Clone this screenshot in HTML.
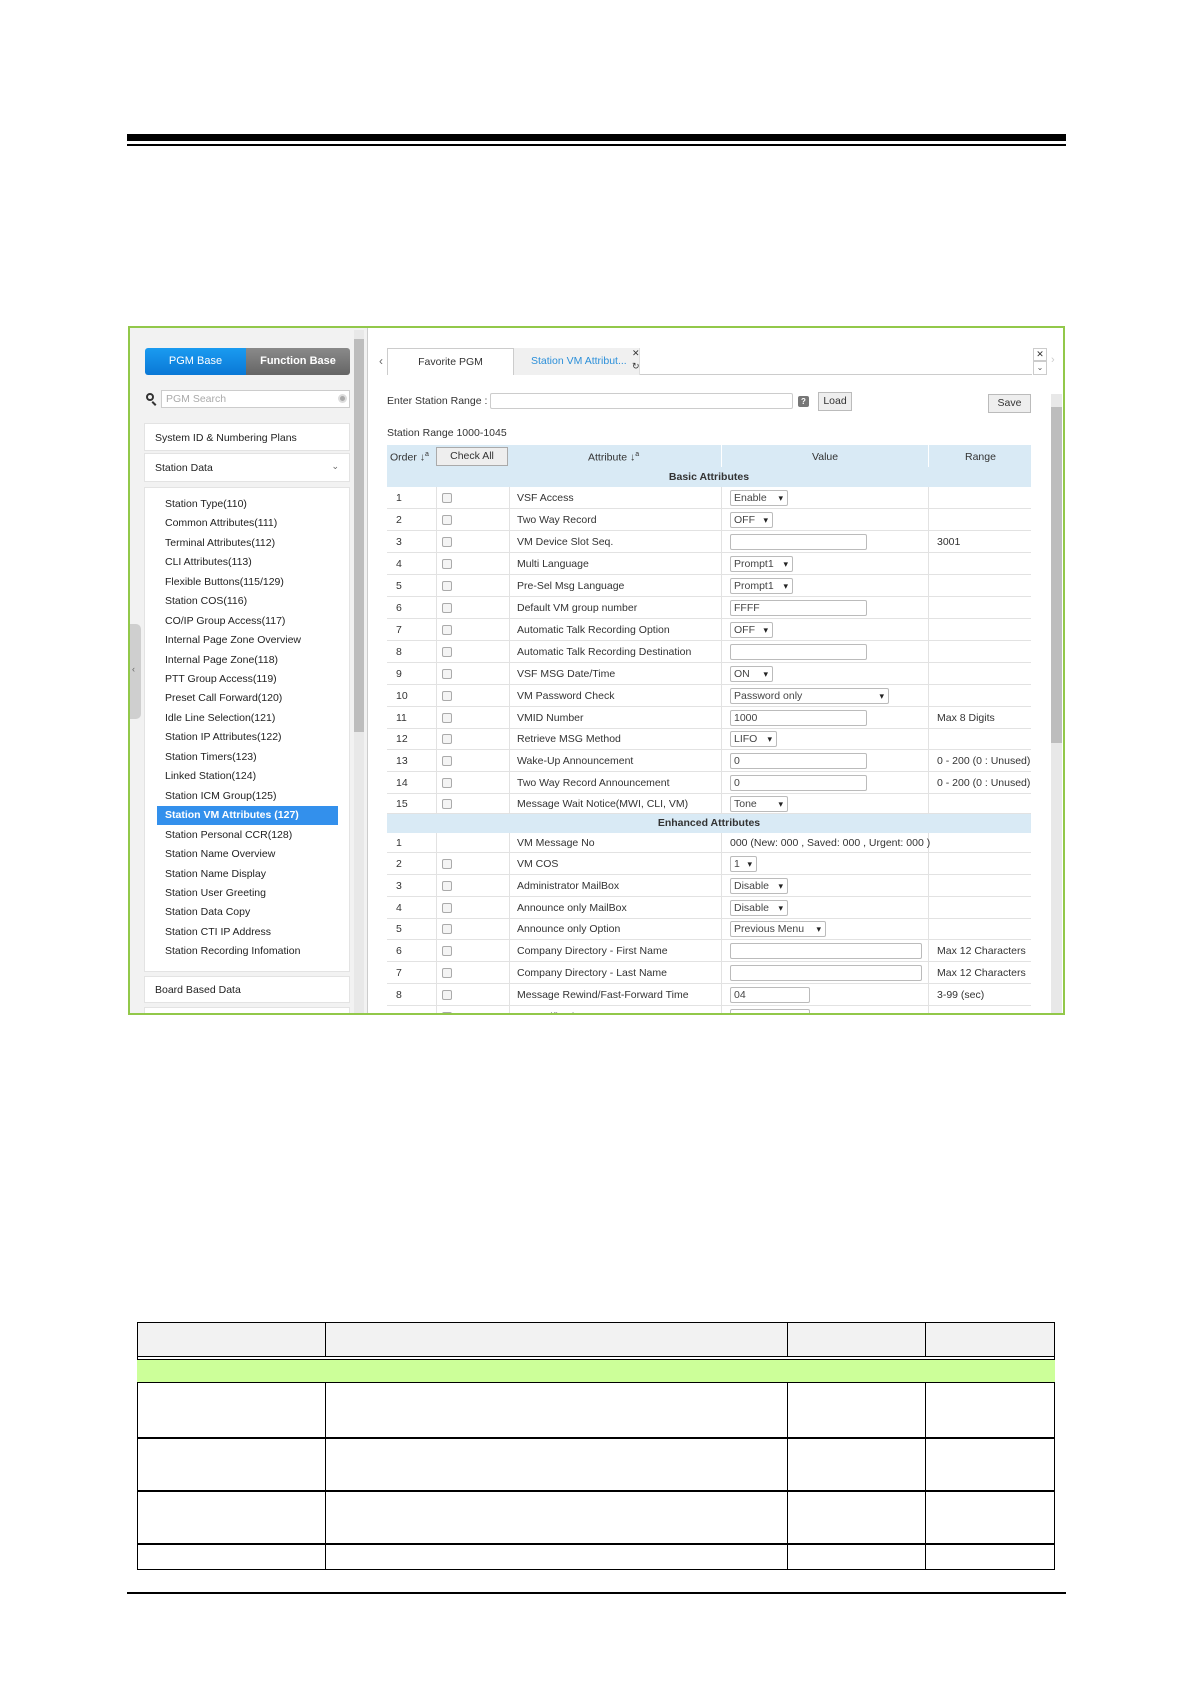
<!DOCTYPE html>
<html><head><meta charset="utf-8"><style>
*{box-sizing:border-box;margin:0;padding:0}
body{width:1191px;height:1684px;background:#fff;position:relative;font-family:"Liberation Sans",Arial,sans-serif;color:#333;overflow:hidden}
.a{position:absolute}
.t{font-size:10.5px;white-space:nowrap}
.li{position:absolute;left:165px;font-size:10.5px;color:#222;white-space:nowrap}
.row{position:absolute;left:387px;width:644px;border-bottom:1px solid #e2e2e2;font-size:10.5px;color:#333}
.row span{position:absolute;top:50%;transform:translateY(-50%);white-space:nowrap}
.cb{position:absolute;left:442px;width:10px;height:10px;border:1px solid #aaa;border-radius:2px;background:#f4f4f4;top:50%;transform:translateY(-50%)}
.sel,.inp{position:absolute;left:730px;height:16px;top:50%;transform:translateY(-50%);border:1px solid #bbb;border-radius:2px;background:#fff;font-size:10.5px;padding-left:3px;line-height:14px;color:#444}
.sel::after{content:"\25BE";position:absolute;right:4px;top:0;font-size:9px;color:#222}
.vl{position:absolute;top:0;bottom:0;width:1px;background:#e2e2e2}
</style></head><body>
<div class="a" style="left:127px;top:134px;width:939px;height:7px;background:#000"></div>
<div class="a" style="left:127px;top:144px;width:939px;height:2px;background:#000"></div>

<!-- screenshot box -->
<div class="a" style="left:128px;top:326px;width:937px;height:689px;border:2px solid #92c84a;background:#fff;overflow:hidden">
 <div class="a" style="left:0;top:0;width:238px;height:687px;background:#f2f2f2;border-right:1px solid #ccc"></div>
</div>
<!-- sidebar -->
<div class="a" style="left:354px;top:330px;width:10px;height:683px;background:#e8e8e8"></div>
<div class="a" style="left:354px;top:339px;width:10px;height:393px;background:#bdbdbd"></div>
<div class="a" style="left:130px;top:624px;width:11px;height:95px;background:#cfcfcf;border-radius:0 5px 5px 0"></div>
<div class="a t" style="left:132px;top:664px;font-size:9px;color:#666">‹</div>
<div class="a" style="left:145px;top:348px;width:101px;height:27px;background:linear-gradient(#1a9bf0,#0a78d6);border-radius:3px 0 0 3px;color:#fff;font-size:11px;text-align:center;line-height:27px">PGM Base</div>
<div class="a" style="left:246px;top:348px;width:104px;height:27px;background:linear-gradient(#8a8a8a,#656565);border-radius:0 3px 3px 0;color:#fff;font-size:11px;font-weight:bold;text-align:center;line-height:27px">Function Base</div>
<div class="a" style="left:146px;top:393px;width:8px;height:8px;border:2px solid #333;border-radius:50%"></div>
<div class="a" style="left:153px;top:401px;width:2px;height:5px;background:#333;transform:rotate(-45deg)"></div>
<div class="a" style="left:161px;top:390px;width:189px;height:18px;border:1px solid #ccc;background:#fff;font-size:10.5px;color:#aaa;padding:2px 4px">PGM Search</div>
<div class="a" style="left:338px;top:394px;width:9px;height:9px;border-radius:50%;background:#aaa;border:2px solid #ddd"></div>
<div class="a" style="left:144px;top:423px;width:206px;height:28px;background:#fff;border:1px solid #e3e3e3;font-size:10.5px;color:#222;padding:8px 10px">System ID &amp; Numbering Plans</div>
<div class="a" style="left:144px;top:453px;width:206px;height:29px;background:#fff;border:1px solid #e3e3e3;font-size:10.5px;color:#222;padding:8px 10px">Station Data<span style="position:absolute;right:10px;top:7px;font-size:9px;color:#666">⌄</span></div>
<div class="a" style="left:144px;top:487px;width:206px;height:485px;background:#fff;border:1px solid #e3e3e3"></div>
<div class="a" style="left:157px;top:806px;width:181px;height:19px;background:#3390ec"></div>
<div class="li" style="top:498px">Station Type(110)</div>
<div class="li" style="top:517px">Common Attributes(111)</div>
<div class="li" style="top:537px">Terminal Attributes(112)</div>
<div class="li" style="top:556px">CLI Attributes(113)</div>
<div class="li" style="top:576px">Flexible Buttons(115/129)</div>
<div class="li" style="top:595px">Station COS(116)</div>
<div class="li" style="top:615px">CO/IP Group Access(117)</div>
<div class="li" style="top:634px">Internal Page Zone Overview</div>
<div class="li" style="top:654px">Internal Page Zone(118)</div>
<div class="li" style="top:673px">PTT Group Access(119)</div>
<div class="li" style="top:692px">Preset Call Forward(120)</div>
<div class="li" style="top:712px">Idle Line Selection(121)</div>
<div class="li" style="top:731px">Station IP Attributes(122)</div>
<div class="li" style="top:751px">Station Timers(123)</div>
<div class="li" style="top:770px">Linked Station(124)</div>
<div class="li" style="top:790px">Station ICM Group(125)</div>
<div class="li" style="top:809px;color:#fff;font-weight:bold">Station VM Attributes (127)</div>
<div class="li" style="top:829px">Station Personal CCR(128)</div>
<div class="li" style="top:848px">Station Name Overview</div>
<div class="li" style="top:868px">Station Name Display</div>
<div class="li" style="top:887px">Station User Greeting</div>
<div class="li" style="top:906px">Station Data Copy</div>
<div class="li" style="top:926px">Station CTI IP Address</div>
<div class="li" style="top:945px">Station Recording Infomation</div>
<div class="a" style="left:144px;top:976px;width:206px;height:27px;background:#fff;border:1px solid #e3e3e3;font-size:10.5px;color:#222;padding:7px 10px">Board Based Data</div>
<div class="a" style="left:144px;top:1007px;width:206px;height:10px;background:#fff;border:1px solid #e3e3e3"></div>

<!-- right panel -->
<div class="a t" style="left:379px;top:354px;color:#666;font-size:12px">‹</div>
<div class="a" style="left:387px;top:374px;width:645px;height:1px;background:#ccc"></div>
<div class="a" style="left:387px;top:348px;width:127px;height:27px;border:1px solid #ccc;border-bottom:none;background:#fff;font-size:10.5px;text-align:center;line-height:26px;color:#333">Favorite PGM</div>
<div class="a" style="left:514px;top:348px;width:126px;height:27px;background:#f0f0f0;border-right:1px solid #ddd;font-size:10.5px;color:#2b8fd9;line-height:26px;padding-left:17px">Station VM Attribut...</div>
<div class="a t" style="left:632px;top:348px;font-size:9px;color:#333">✕</div>
<div class="a t" style="left:632px;top:361px;font-size:9px;color:#333">↻</div>
<div class="a" style="left:1033px;top:348px;width:14px;height:13px;border:1px solid #ccc;font-size:9px;text-align:center;line-height:11px">✕</div>
<div class="a" style="left:1033px;top:361px;width:14px;height:14px;border:1px solid #ccc;font-size:8px;text-align:center;line-height:12px;color:#555">⌄</div>
<div class="a t" style="left:1051px;top:354px;color:#ccc;font-size:11px">›</div>

<div class="a t" style="left:387px;top:395px">Enter Station Range :</div>
<div class="a" style="left:490px;top:393px;width:303px;height:16px;border:1px solid #ccc;border-radius:2px"></div>
<div class="a" style="left:798px;top:396px;width:11px;height:11px;background:#777;border-radius:2px;color:#fff;font-size:8px;text-align:center;line-height:11px;font-weight:bold">?</div>
<div class="a" style="left:818px;top:392px;width:34px;height:19px;border:1px solid #bbb;background:#eee;font-size:10.5px;text-align:center;line-height:17px">Load</div>
<div class="a" style="left:988px;top:394px;width:43px;height:19px;border:1px solid #bbb;background:#eee;font-size:10.5px;text-align:center;line-height:17px">Save</div>
<div class="a" style="left:1051px;top:394px;width:11px;height:619px;background:#e8e8e8"></div>
<div class="a" style="left:1051px;top:407px;width:11px;height:336px;background:#bdbdbd"></div>
<div class="a t" style="left:387px;top:427px">Station Range 1000-1045</div>

<div class="a" style="left:387px;top:445px;width:644px;height:42px;background:#d9eaf5"></div>
<div class="a t" style="left:390px;top:451px">Order ↓<sup style="font-size:7px">a</sup></div>
<div class="a" style="left:436px;top:447px;width:72px;height:19px;border:1px solid #aaa;background:#eee;font-size:10.5px;text-align:center;line-height:17px;color:#333">Check All</div>
<div class="a t" style="left:588px;top:451px">Attribute ↓<sup style="font-size:7px">a</sup></div>
<div class="a t" style="left:812px;top:451px">Value</div>
<div class="a t" style="left:965px;top:451px">Range</div>
<div class="a" style="left:721px;top:445px;width:1px;height:22px;background:#fff"></div>
<div class="a" style="left:928px;top:445px;width:1px;height:22px;background:#fff"></div>
<div class="a t" style="left:387px;top:471px;width:644px;text-align:center;font-weight:bold;color:#333">Basic Attributes</div>

<div class="a" style="left:387px;top:487px;width:644px;height:327px">
 <div class="vl" style="left:49px"></div><div class="vl" style="left:122px"></div><div class="vl" style="left:334px"></div><div class="vl" style="left:541px"></div>
</div>
<div class="a" style="left:387px;top:833px;width:644px;height:182px">
 <div class="vl" style="left:49px"></div><div class="vl" style="left:122px"></div><div class="vl" style="left:334px"></div><div class="vl" style="left:541px"></div>
</div>

<div class="row" style="top:487px;height:22px"><span style="left:9px">1</span><i class="cb" style="left:55px"></i><span style="left:130px">VSF Access</span><div class="sel" style="left:343px;width:58px">Enable</div></div>
<div class="row" style="top:509px;height:22px"><span style="left:9px">2</span><i class="cb" style="left:55px"></i><span style="left:130px">Two Way Record</span><div class="sel" style="left:343px;width:43px">OFF</div></div>
<div class="row" style="top:531px;height:22px"><span style="left:9px">3</span><i class="cb" style="left:55px"></i><span style="left:130px">VM Device Slot Seq.</span><div class="inp" style="left:343px;width:137px"></div><span style="left:550px">3001</span></div>
<div class="row" style="top:553px;height:22px"><span style="left:9px">4</span><i class="cb" style="left:55px"></i><span style="left:130px">Multi Language</span><div class="sel" style="left:343px;width:63px">Prompt1</div></div>
<div class="row" style="top:575px;height:22px"><span style="left:9px">5</span><i class="cb" style="left:55px"></i><span style="left:130px">Pre-Sel Msg Language</span><div class="sel" style="left:343px;width:63px">Prompt1</div></div>
<div class="row" style="top:597px;height:22px"><span style="left:9px">6</span><i class="cb" style="left:55px"></i><span style="left:130px">Default VM group number</span><div class="inp" style="left:343px;width:137px">FFFF</div></div>
<div class="row" style="top:619px;height:22px"><span style="left:9px">7</span><i class="cb" style="left:55px"></i><span style="left:130px">Automatic Talk Recording Option</span><div class="sel" style="left:343px;width:43px">OFF</div></div>
<div class="row" style="top:641px;height:22px"><span style="left:9px">8</span><i class="cb" style="left:55px"></i><span style="left:130px">Automatic Talk Recording Destination</span><div class="inp" style="left:343px;width:137px"></div></div>
<div class="row" style="top:663px;height:22px"><span style="left:9px">9</span><i class="cb" style="left:55px"></i><span style="left:130px">VSF MSG Date/Time</span><div class="sel" style="left:343px;width:43px">ON</div></div>
<div class="row" style="top:685px;height:22px"><span style="left:9px">10</span><i class="cb" style="left:55px"></i><span style="left:130px">VM Password Check</span><div class="sel" style="left:343px;width:159px">Password only</div></div>
<div class="row" style="top:707px;height:22px"><span style="left:9px">11</span><i class="cb" style="left:55px"></i><span style="left:130px">VMID Number</span><div class="inp" style="left:343px;width:137px">1000</div><span style="left:550px">Max 8 Digits</span></div>
<div class="row" style="top:729px;height:21px"><span style="left:9px">12</span><i class="cb" style="left:55px"></i><span style="left:130px">Retrieve MSG Method</span><div class="sel" style="left:343px;width:47px">LIFO</div></div>
<div class="row" style="top:750px;height:22px"><span style="left:9px">13</span><i class="cb" style="left:55px"></i><span style="left:130px">Wake-Up Announcement</span><div class="inp" style="left:343px;width:137px">0</div><span style="left:550px">0 - 200 (0 : Unused)</span></div>
<div class="row" style="top:772px;height:22px"><span style="left:9px">14</span><i class="cb" style="left:55px"></i><span style="left:130px">Two Way Record Announcement</span><div class="inp" style="left:343px;width:137px">0</div><span style="left:550px">0 - 200 (0 : Unused)</span></div>
<div class="row" style="top:794px;height:20px"><span style="left:9px">15</span><i class="cb" style="left:55px"></i><span style="left:130px">Message Wait Notice(MWI, CLI, VM)</span><div class="sel" style="left:343px;width:58px">Tone</div></div>
<div class="a t" style="left:387px;top:814px;width:644px;height:19px;background:#d9eaf5;text-align:center;font-weight:bold;line-height:19px">Enhanced Attributes</div>
<div class="row" style="top:833px;height:20px"><span style="left:9px">1</span><span style="left:130px">VM Message No</span><span style="left:343px">000 (New: 000 , Saved: 000 , Urgent: 000 )</span></div>
<div class="row" style="top:853px;height:22px"><span style="left:9px">2</span><i class="cb" style="left:55px"></i><span style="left:130px">VM COS</span><div class="sel" style="left:343px;width:27px">1</div></div>
<div class="row" style="top:875px;height:22px"><span style="left:9px">3</span><i class="cb" style="left:55px"></i><span style="left:130px">Administrator MailBox</span><div class="sel" style="left:343px;width:58px">Disable</div></div>
<div class="row" style="top:897px;height:22px"><span style="left:9px">4</span><i class="cb" style="left:55px"></i><span style="left:130px">Announce only MailBox</span><div class="sel" style="left:343px;width:58px">Disable</div></div>
<div class="row" style="top:919px;height:21px"><span style="left:9px">5</span><i class="cb" style="left:55px"></i><span style="left:130px">Announce only Option</span><div class="sel" style="left:343px;width:96px">Previous Menu</div></div>
<div class="row" style="top:940px;height:22px"><span style="left:9px">6</span><i class="cb" style="left:55px"></i><span style="left:130px">Company Directory - First Name</span><div class="inp" style="left:343px;width:192px"></div><span style="left:550px">Max 12 Characters</span></div>
<div class="row" style="top:962px;height:22px"><span style="left:9px">7</span><i class="cb" style="left:55px"></i><span style="left:130px">Company Directory - Last Name</span><div class="inp" style="left:343px;width:192px"></div><span style="left:550px">Max 12 Characters</span></div>
<div class="row" style="top:984px;height:22px"><span style="left:9px">8</span><i class="cb" style="left:55px"></i><span style="left:130px">Message Rewind/Fast-Forward Time</span><div class="inp" style="left:343px;width:80px">04</div><span style="left:550px">3-99 (sec)</span></div>
<div class="row" style="top:1006px;height:22px;border:none"><span style="left:9px">9</span><i class="cb" style="left:55px"></i><span style="left:130px">VM notification count</span><div class="inp" style="left:343px;width:80px">00</div><span style="left:550px">0-99</span></div>
<div class="a" style="left:128px;top:1013px;width:937px;height:2px;background:#92c84a"></div>
<div class="a" style="left:128px;top:1015px;width:940px;height:20px;background:#fff"></div>

<!-- bottom table -->
<div class="a" style="left:137px;top:1322px;width:918px;height:248px;border:1.5px solid #000"></div>
<div class="a" style="left:138px;top:1323px;width:916px;height:33px;background:#f2f2f2"></div>
<div class="a" style="left:137px;top:1356px;width:918px;height:1px;background:#000"></div>
<div class="a" style="left:137px;top:1359px;width:918px;height:24px;background:#ccff99;border-top:1px solid #000;border-bottom:1.5px solid #000"></div>
<div class="a" style="left:137px;top:1437px;width:918px;height:1.5px;background:#000"></div>
<div class="a" style="left:137px;top:1490px;width:918px;height:1.5px;background:#000"></div>
<div class="a" style="left:137px;top:1543px;width:918px;height:1.5px;background:#000"></div>
<div class="a" style="left:325px;top:1322px;width:1px;height:34px;background:#000"></div>
<div class="a" style="left:787px;top:1322px;width:1px;height:34px;background:#000"></div>
<div class="a" style="left:925px;top:1322px;width:1px;height:34px;background:#000"></div>
<div class="a" style="left:325px;top:1383px;width:1px;height:187px;background:#000"></div>
<div class="a" style="left:787px;top:1383px;width:1px;height:187px;background:#000"></div>
<div class="a" style="left:925px;top:1383px;width:1px;height:187px;background:#000"></div>

<div class="a" style="left:127px;top:1592px;width:939px;height:2px;background:#000"></div>
</body></html>
